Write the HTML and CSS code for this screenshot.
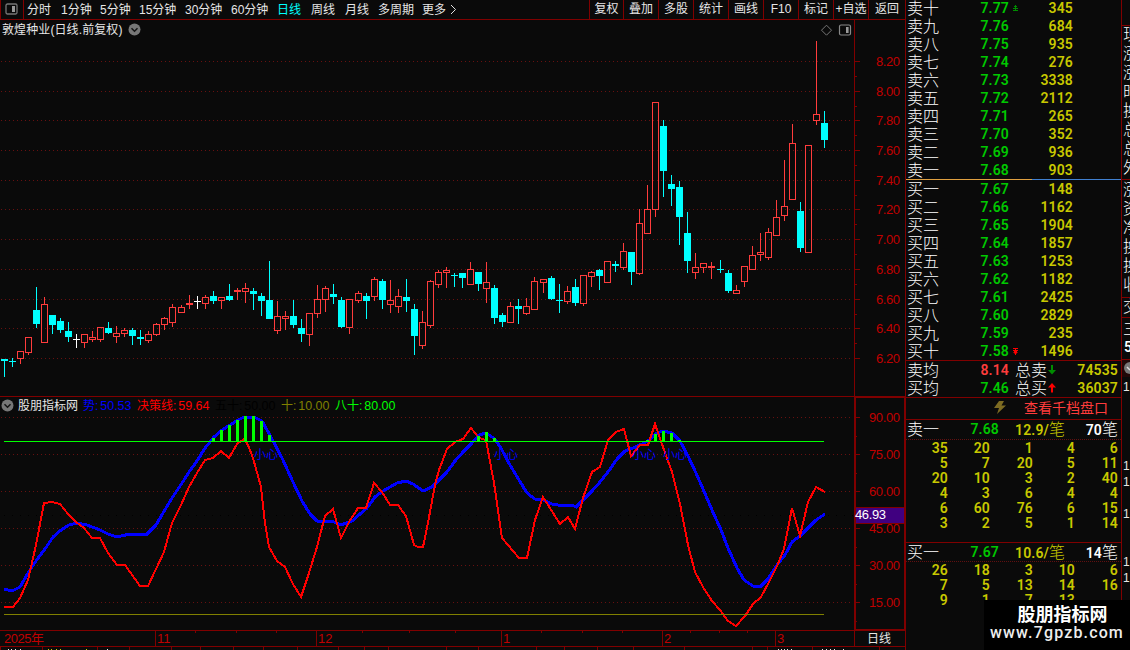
FILE: index.html
```
<!DOCTYPE html>
<html lang="zh-CN">
<head>
<meta charset="utf-8">
<title>敦煌种业 日线</title>
<link rel="stylesheet" href="styles.css">
</head>
<body>
<div class="app">
  <main class="charts">
    <nav class="toolbar">
      <span class="toggle"><svg width="13" height="12" viewBox="0 0 13 12"><rect x="1" y="1" width="11" height="10" rx="1.5" fill="none" stroke="#777" stroke-width="1.3"/><rect x="7" y="3" width="3" height="6" fill="#999"/></svg></span>
      <div class="periods">
        <span class="w2">分时</span><span class="w3">1分钟</span><span class="w3">5分钟</span><span class="w4">15分钟</span><span class="w4">30分钟</span><span class="w4">60分钟</span><span class="w2 active">日线</span><span class="w2">周线</span><span class="w2b">月线</span><span class="w5">多周期</span><span class="w6">更多</span><svg width="7" height="11" viewBox="0 0 7 11"><path d="M1 1l4.5 4.5L1 10" fill="none" stroke="#e0e0e0"/></svg>
      </div>
      <div class="tools"><span class="n">复权</span><span>叠加</span><span>多股</span><span>统计</span><span>画线</span><span>F10</span><span>标记</span><span>+自选</span><span class="last">返回</span></div>
    </nav>
    <section class="price">
      <header class="title"><span class="name">敦煌种业(日线.前复权)</span>
        <svg class="badge" width="13" height="13" viewBox="0 0 13 13"><circle cx="6.5" cy="6.5" r="6" fill="#777"/><path d="M3.5 5.3l3 3 3-3" fill="none" stroke="#151515" stroke-width="1.5"/></svg>
        <svg class="marks" width="30" height="13" viewBox="0 0 30 13"><path d="M6.5 1.2l5 5-5 5-5-5z" fill="none" stroke="#777"/><rect x="19.5" y="1" width="11" height="10" rx="1.5" fill="none" stroke="#888" stroke-width="1.2"/><rect x="26" y="3" width="2.6" height="6" fill="#999"/></svg>
      </header>
      <svg id="candles" class="plot" width="905" height="356" viewBox="0 40 905 356"></svg>
    </section>
    <section class="indicator">
      <header class="legend">
        <svg width="13" height="13" viewBox="0 0 13 13"><circle cx="6.5" cy="6.5" r="6" fill="#777"/><path d="M3.5 5.3l3 3 3-3" fill="none" stroke="#151515" stroke-width="1.5"/></svg>
        <span class="l0">股朋指标网</span><span class="l1">势:<b>50.53</b></span><span class="l2">决策线:<b>59.64</b></span><span class="l3">五十:<b>50.00</b></span><span class="l4">十:<b>10.00</b></span><span class="l5">八十:<b>80.00</b></span>
      </header>
      <svg id="osc" class="plot" width="905" height="236" viewBox="0 414 905 236"></svg>
    </section>
  </main>
  <aside class="book">
    <div id="sells" class="levels sells"></div>
    <div class="split"></div>
    <div id="buys" class="levels"></div>
    <div class="averages">
      <div class="row"><span class="lab">卖均</span><b class="px up">8.14</b><span class="tot">总卖</span><svg width="8" height="10" viewBox="0 0 8 10"><path d="M3 0h2v5h3L4 9.500 0 5h3z" fill="#008c00"/></svg><b class="sum">74535</b></div>
      <div class="row"><span class="lab">买均</span><b class="px">7.46</b><span class="tot">总买</span><svg width="8" height="10" viewBox="0 0 8 10"><path d="M3 9.500h2v-5h3L4 0 0 4.500h3z" fill="#f00"/></svg><b class="sum">36037</b></div>
    </div>
    <div class="depth"><svg width="12" height="13" viewBox="0 0 12 13"><path d="M5 0h5L7.500 4.500H12L3 13l2-6H0z" fill="#7d6b22"/></svg><span>查看千档盘口</span></div>
    <div class="queue q1"><div class="qhead"><span class="lab">卖一</span><b class="px">7.68</b><span class="avg"><b>12.9/</b>笔</span><span class="cnt"><b>70</b>笔</span></div><div class="cells" id="q1"></div></div>
    <div class="queue q2"><div class="qhead"><span class="lab">买一</span><b class="px">7.67</b><span class="avg"><b>10.6/</b>笔</span><span class="cnt"><b>14</b>笔</span></div><div class="cells" id="q2"></div></div>
  </aside>
  <aside class="edge"><svg id="edge" width="8" height="650" viewBox="1122 0 8 650"></svg></aside>
  <div class="watermark"><strong>股朋指标网</strong><span>www.7gpzb.com</span></div>
</div>
<script src="chart.js"></script>
</body>
</html>
```
FILE: styles.css
```
* { box-sizing: border-box; }
body { margin: 0; background: #0a0a0a; color: #e6e6e6; font: 12px/14px "Liberation Sans", "Noto Sans CJK SC", sans-serif; overflow: hidden; }
b { font-weight: 500; }
svg { display: block; flex: none; }
.app { position: relative; display: grid; grid-template-columns: 905px 216px 9px; width: 1130px; height: 650px; overflow: hidden; }
.charts { display: flex; flex-direction: column; height: 650px; }
.toolbar { display: flex; height: 20px; border-bottom: 1px solid #800000; border-left: 1px solid #800000; white-space: nowrap; line-height: 18px; }
.toggle { width: 23px; border-right: 1px solid #800000; padding: 3px 0 0 4px; }
.periods { display: flex; align-items: center; padding-left: 3px; width: 565px; }
.w2 { width: 34px; }
.w2b { width: 33px; }
.w3 { width: 39px; }
.w4 { width: 46px; }
.w5 { width: 44px; }
.w6 { width: 28px; }
.active { color: #00ffff; }
.tools { display: flex; line-height: 19px; }
.tools span { width: 35px; border-left: 1px solid #800000; text-align: center; }
.tools .n { width: 34px; }
.tools .last { width: 37px; }
.price { height: 377px; border-bottom: 1px solid #800000; }
.title { display: flex; align-items: center; width: 855px; height: 20px; padding-left: 2px; border-right: 1px solid #800000; }
.name { width: 126px; letter-spacing: 0.1px; white-space: nowrap; }
.marks { margin-left: auto; margin-right: 4px; overflow: visible; }
.badge { margin-top: -1px; }
.plot { shape-rendering: crispEdges; overflow: visible; }
.axis { font: 13px "Liberation Sans", sans-serif; fill: #c00000; }
.note { font: 12px "Noto Sans CJK SC", sans-serif; fill: #0000ff; }
.day { font: 12px "Noto Sans CJK SC", sans-serif; fill: #e6e6e6; }
.cursor { font: 13px "Liberation Sans", sans-serif; fill: #fff; }
.indicator { height: 253px; }
.legend { display: flex; align-items: center; height: 17px; padding-left: 1px; border-right: 2px solid #800000; width: 856px; white-space: nowrap; }
.legend b { font: 12.500px "Liberation Sans", sans-serif; letter-spacing: -0.05px; margin-left: 2px; }
.l0 { width: 66px; padding-left: 4px; margin-right: 3px; }
.l1 { width: 54px; color: #0000ff; }
.l2 { width: 78px; color: #ff0000; }
.l3 { width: 66px; color: #000; }
.l4 { width: 54px; color: #808000; }
.l5 { color: #00ff00; }
.book { border-left: 1px solid #800000; font: 16px/18px "Noto Sans CJK SC", sans-serif; font-weight: 300; color: #fff; white-space: nowrap; }
.book b { font: 600 14px/18px Roboto, sans-serif; letter-spacing: 0.15px; }
.sells { margin-top: -1px; }
.row { display: flex; align-items: center; height: 18px; padding-left: 1px; }
.lab { width: 61px; line-height: 16px; padding-bottom: 2px; }
.px { width: 41px; text-align: right; color: #00c800; }
.px.up { color: #ff3c3c; }
.flag { width: 12px; display: flex; justify-content: center; }
.qty { width: 52px; text-align: right; color: #c8c800; }
.split { height: 1px; background: linear-gradient(90deg, #e0a040 0 126px, #4080d0 126px); }
.averages { border-top: 1px solid #800000; border-bottom: 1px solid #800000; height: 38px; }
.tot { width: 32px; margin-left: 6px; margin-right: 1px; line-height: 16px; padding-bottom: 2px; }
.sum { margin-left: auto; padding-right: 3px; color: #c8c800; }
.depth { display: flex; align-items: center; height: 22px; padding: 0 0 3px 88px; border-bottom: 1px solid #800000; color: #ff3c3c; font-size: 14px; font-weight: 400; }
.depth span { margin-left: 18px; }
.q1 { height: 123px; border-bottom: 1px solid #800000; }
.qhead { display: flex; align-items: center; height: 19px; padding: 0 3px 1px 1px; }
.q2 .qhead { height: 18px; }
.qhead .lab { width: 51px; }
.avg { margin-left: 16px; color: #c8c800; }
.cnt { margin-left: auto; }
.cells { display: grid; grid-template-columns: 42px 42px 43px 42px 43px; grid-auto-rows: 15px; border-top: 1px dotted #601010; text-align: right; color: #c8c800; }
.cells b { line-height: 16px; }
.edge { border-left: 1px solid #800000; }
.edgetext { font: 300 16px "Noto Sans CJK SC", sans-serif; fill: #fff; }
.edgebold { font: 600 14px Roboto, sans-serif; fill: #fff; }
.edgenum { font: 12px "Liberation Sans", sans-serif; fill: #e6e6e6; }
.watermark { position: absolute; right: 0; bottom: 0; width: 146px; height: 50px; background: #000; color: #fff; display: flex; flex-direction: column; align-items: center; white-space: nowrap; }
.watermark strong { font: bold 18px/20px "Noto Sans CJK SC", sans-serif; margin: 3px 0 0 11px; }
.watermark span { font: 500 16px/20px Roboto, sans-serif; letter-spacing: 1.15px; color: #eee; }
```
FILE: chart.js
```
const rect = (x, y, w, h, f) => `<rect x="${x}" y="${y}" width="${w}" height="${h}" fill="${f}"/>`;
const text = (x, y, s, c, w) => `<text x="${x}" y="${y}" class="${c}"${w ? ` textLength="${w}"` : ''}>${s}</text>`;
const DARK = '#800000', RED = '#ff3c3c', CYAN = '#00ffff';

// Each candle: kind, high, body top, body bottom, low (in pixels)
const candles = `c359,359,361,377 c358,361,362,367 r351,351,359,364 r337,337,353,355 c287,310,324,328 r297,304,343,343 c315,315,325,334 c318,321,330,333 c322,331,337,342 w334,339,340,348 r334,334,343,348 r331,337,340,342 r327,327,340,342 c322,328,333,334 r326,333,337,343 r328,330,334,337 c328,330,336,345 c330,337,339,345 r331,334,341,343 r323,324,335,336 r317,318,325,330 r304,307,323,327
r305,307,313,313 r295,303,305,309 w296,301,302,309 r295,297,304,309 c291,296,301,304 r297,297,301,309 c284,296,300,301 r288,290,292,300 r283,288,292,303 c288,291,294,310 c293,296,301,316 c261,300,319,319 r301,316,331,334 r311,316,319,330 c300,316,325,328 c319,328,334,342 r313,313,335,346 r285,299,314,318 r286,288,300,312 c284,294,297,304 c297,300,327,328 r299,299,328,334
r291,293,301,303 c293,296,301,319 r277,279,297,301 c279,281,300,309 r280,300,305,313 r289,296,307,313 c279,297,301,312 c304,309,336,355 r311,322,346,349 r280,281,326,328 r270,272,285,288 r267,270,273,288 c273,275,276,287 c273,273,278,288 r262,269,285,285 c272,272,284,291 r262,282,289,303 c285,288,318,324 c313,315,322,327 r302,306,323,323 c299,306,309,324 r298,306,314,315 r277,281,310,310
r279,279,283,293 c276,278,299,300 c284,300,301,313 r286,291,302,304 c279,287,303,306 r275,275,304,306 r271,272,277,287 c269,270,276,290 r261,261,283,283 c261,264,266,272 r243,251,268,270 c252,252,272,285 r209,223,274,275 r185,209,234,234 r102,102,210,217 c120,126,171,197 c175,184,189,206 c181,187,217,245 c212,233,261,273 r253,267,273,279 r263,263,268,273 r262,266,268,279
c260,269,270,273 c270,273,291,293 r285,290,294,294 r266,266,282,287 r246,255,270,270 r233,252,255,261 r228,232,258,260 r200,217,236,236 r160,206,216,221 r124,143,200,200 c202,211,248,252 r145,145,253,253 r41,114,121,125 c111,123,140,148`.split('\n').map(g => g.trim().split(' '));
const starts = [4, 181, 358, 543, 720];

const dots = (y, c = '#681010', step = 4, x = 1) => `<line x1="${x}" x2="853" y1="${y + .5}" y2="${y + .5}" stroke="${c}" stroke-dasharray="1 ${step - 1}"/>`;
let s = '';
const gy = [61, 91, 120, 150, 180, 209, 239, 269, 299, 328, 358];
gy.forEach((y, i) => {
  s += dots(y) + rect(855, y, 5, 1, DARK) + text(876, y + 5, (8.2 - i * .2).toFixed(2), 'axis', 24);
  if (i < 10) s += rect(855, y + 15, 2, 1, DARK);
});
s += rect(854, 40, 1, 356, DARK);
candles.forEach((g, gi) => g.forEach((d, i) => {
  const x = starts[gi] + i * 8, k = d[0], [h, t, b, l] = d.slice(1).split(',').map(Number);
  if (k === 'r') {
    s += rect(x, h, 1, t - h, RED) + rect(x, b, 1, l - b, RED);
    s += b - t < 3 ? rect(x - 3, t, 7, b - t, RED) : `<rect x="${x - 2.5}" y="${t + .5}" width="6" height="${b - t - 1}" fill="none" stroke="${RED}"/>`;
  } else {
    const c = k === 'c' ? CYAN : '#fff';
    s += rect(x, h, 1, l - h, c) + rect(x - 3, t, 7, b - t, c);
  }
}));
document.getElementById('candles').innerHTML = s;

s = '';
[417, 454, 491, 528, 565, 602].forEach((y, i) => {
  s += dots(y) + rect(855, y, 5, 1, DARK) + text(869, y + 5, (90 - i * 15).toFixed(2), 'axis', 31);
  s += rect(855, y + 19, 2, 1, DARK);
});
s += dots(515, '#000', 8, 4);
s += '<polyline fill="none" stroke="#00f" stroke-width="3" points="4,589 12,591 20,587 28,573 36,561 45,549 53,537 61,530 69,525 77,523 87,525 100,530 108,534 117,537 130,534 147,534 156,525 163,513 172,498 184,480 189,472 197,461 205,448 214,437 222,430 230,425 238,420 244,417 254,417 262,421 272,439 283,460 293,482 302,501 310,514 317,521 334,522 341,525 352,521 360,514 367,508 375,497 383,491 397,483 406,481 413,484 423,491 432,487 438,481 447,472 455,461 463,452 471,444 479,435 486,433 495,439 502,450 510,465 519,480 527,493 535,499 543,500 552,504 558,505 572,505 576,507 583,500 592,491 600,482 608,472 617,459 625,451 633,448 642,444 648,441 657,433 663,431 672,433 680,441 688,456 696,473 703,489 712,510 721,530 728,548 737,568 744,580 753,586 761,586 768,579 777,565 785,555 792,542 800,536 808,528 816,520 825,514"/>';
s += '<polyline fill="none" stroke="#f00" stroke-width="2" points="4,607 13,607 20,598 28,580 36,545 44,503 52,502 60,504 68,514 76,522 84,528 92,538 100,538 108,553 117,565 125,565 140,586 148,586 156,569 164,552 172,523 181,505 189,487 197,473 205,460 213,458 221,451 229,458 237,444 244,439 248,445 253,458 261,487 265,523 269,547 277,561 285,567 293,584 301,597 309,573 317,547 325,516 333,509 341,538 349,522 358,508 366,508 374,483 382,492 390,505 398,505 406,516 414,545 418,547 423,547 427,528 435,485 439,470 447,449 455,442 463,439 471,428 479,438 486,440 494,483 502,538 519,558 527,558 535,520 543,497 560,524 568,517 575,529 583,498 592,472 600,467 608,440 616,432 624,429 631,456 640,445 648,445 655,424 663,447 672,472 680,504 688,545 695,572 703,587 712,601 720,610 728,621 736,626 745,616 753,604 761,597 769,582 777,566 784,549 792,508 800,536 808,502 816,487 825,492"/>';
[[213, 438], [221, 430], [229, 425], [237, 420], [245, 416], [253, 416], [261, 421], [269, 435], [478, 436], [486, 432], [494, 438], [647, 440], [655, 434], [663, 431], [671, 433], [679, 440]].forEach(([x, y]) => s += rect(x - 1, y, 3, 441 - y, '#0f0'));
s += rect(4, 441, 820, 1, '#0f0') + rect(4, 614, 820, 1, '#808000');
[254, 494, 632, 663].forEach(x => s += text(x, 459, '小心', 'note'));
// axes
s += rect(0, 630, 905, 1, DARK) + rect(0, 646, 905, 1, DARK) + rect(854, 414, 2, 217, DARK) + rect(854, 631, 1, 16, DARK) + rect(855, 629, 50, 2, DARK) + rect(855, 397, 50, 1, DARK) + rect(904, 397, 1, 234, DARK);
[155, 316, 501, 662, 775].forEach((x, i) => s += rect(x, 631, 1, 15, DARK) + text(x + 2, 643, [11, 12, 1, 2, 3][i], 'axis'));
s += text(4, 643, '2025年', 'axis', 40);
[195, 236, 276, 362, 409, 455, 541, 582, 622, 690, 719, 747].forEach(x => s += rect(x, 631, 1, 2, DARK));
[0, 42, 97, 129, 171, 200, 233, 263, 297, 338, 364, 388, 446, 478, 536, 564, 597, 633, 684, 752, 767, 812, 879].forEach(x => s += rect(x, 647, 1, 3, DARK));
[8, 11, 15, 20, 107, 778, 781, 784, 787, 791, 822, 826, 830, 834, 843].forEach(x => s += rect(x, 649, 1, 1, '#e6e6e6'));
[48, 51, 56, 60, 86].forEach(x => s += rect(x, 649, 1, 1, '#c8c800'));
s += text(867, 643, '日线', 'day');
s += rect(856, 507, 48, 17, DARK) + rect(856, 508, 48, 15, '#400080') + text(855, 519, '46.93', 'cursor', 31);
document.getElementById('osc').innerHTML = s;

const flagUp = '<svg width="5" height="7" viewBox="0 0 5 7"><path d="M2 0h1v1h1v1H3v1h2v1H3v1h2v1H0V5h2V4H0V3h2V2H1V1h1z" fill="#008c00"/></svg>';
const flagDown = '<svg width="5" height="7" viewBox="0 0 5 7"><path d="M0 0h5v1H3v1h2v1H4v1h1L3 6v1H2V6L0 4h1V3H0V2h2V1H0z" fill="#f00"/></svg>';
const level = (n, p, q, f) => `<div class="row"><span class="lab">${n}</span><b class="px">${p}</b><span class="flag">${f || ''}</span><b class="qty">${q}</b></div>`;
const nums = '一二三四五六七八九十';
document.getElementById('sells').innerHTML = [345, 684, 935, 276, 3338, 2112, 265, 352, 936, 903].map((q, i) => level('卖' + nums[9 - i], (7.77 - i / 100).toFixed(2), q, i ? '' : flagUp)).join('');
document.getElementById('buys').innerHTML = [148, 1162, 1904, 1857, 1253, 1182, 2425, 2829, 235, 1496].map((q, i) => level('买' + nums[i], (7.67 - i / 100).toFixed(2), q, i === 9 ? flagDown : '')).join('');
const cells = (id, list) => document.getElementById(id).innerHTML = list.map(v => `<b>${v}</b>`).join('');
cells('q1', [35, 20, 1, 4, 6, 5, 7, 20, 5, 11, 20, 10, 3, 2, 40, 4, 3, 6, 4, 4, 6, 60, 76, 6, 15, 3, 2, 5, 1, 14]);
cells('q2', [26, 18, 3, 10, 6, 7, 5, 13, 14, 16, 9, 1, 7, 13]);

s = [25, 179, 297, 317, 359].map(y => rect(1121, y, 9, 1, DARK)).join('');
[['现', 35], ['涨', 54], ['涨', 73], ['时', 92], ['换', 111], ['总', 130], ['总', 149], ['外', 168], ['涨', 190], ['资', 209], ['净', 228], ['换', 247], ['换', 266], ['收', 285], ['交', 307], ['三', 330]].forEach(([t, y]) => s += text(1123, y + 5, t, 'edgetext'));
s += text(1124, 352, '5', 'edgebold');
s += rect(1122, 360, 8, 17, '#200808') + '<circle cx="1130" cy="368" r="6" fill="#777"/><path d="M1127 367l3 3" stroke="#ddd" stroke-width="1.5"/>';
[386, 465, 481, 513, 561, 577].forEach(y => s += text(1123, y + 5, '1', 'edgenum'));
document.getElementById('edge').innerHTML = s;
```
